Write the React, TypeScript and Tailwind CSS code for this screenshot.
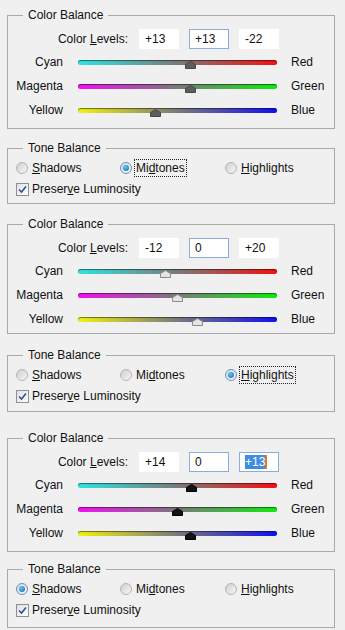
import React from 'react';

type Tone = 'Shadows' | 'Midtones' | 'Highlights';
type ThumbKind = 'dark' | 'light' | 'black';

type Panel = {
  levels: string[];
  focused: boolean[];
  highlightLast: boolean;
  thumb: ThumbKind;
  tone: Tone;
  focusTone: Tone | null;
  cbTop: string;
  cbBottom: string;
  tbTop: string;
  tbBottom: string;
};

const sliders = [
  { left: 'Cyan', right: 'Red', grad: 'bg-[linear-gradient(to_right,#2ee4e4,#7a7a7a_50%,#f51010)]' },
  { left: 'Magenta', right: 'Green', grad: 'bg-[linear-gradient(to_right,#f210f2,#7a7a7a_50%,#10ea10)]' },
  { left: 'Yellow', right: 'Blue', grad: 'bg-[linear-gradient(to_right,#f2f210,#7a7a7a_50%,#1010f2)]' },
];

const panels: Panel[] = [
  {
    levels: ['+13', '+13', '-22'],
    focused: [false, true, false],
    highlightLast: false,
    thumb: 'dark',
    tone: 'Midtones',
    focusTone: 'Midtones',
    cbTop: 'mt-[8px]',
    cbBottom: 'pb-[6px]',
    tbTop: 'mt-[12px]',
    tbBottom: 'pb-[4px]',
  },
  {
    levels: ['-12', '0', '+20'],
    focused: [false, true, false],
    highlightLast: false,
    thumb: 'light',
    tone: 'Highlights',
    focusTone: 'Highlights',
    cbTop: 'mt-[13px]',
    cbBottom: 'pb-[2px]',
    tbTop: 'mt-[14px]',
    tbBottom: 'pb-[5px]',
  },
  {
    levels: ['+14', '0', '+13'],
    focused: [false, true, true],
    highlightLast: true,
    thumb: 'black',
    tone: 'Shadows',
    focusTone: null,
    cbTop: 'mt-[19px]',
    cbBottom: 'pb-[6px]',
    tbTop: 'mt-[10px]',
    tbBottom: 'pb-[7px]',
  },
];

const thumbPaint = {
  dark: { fill: '#5e5e5e', stroke: '#464646' },
  light: { fill: '#e4e4e4', stroke: '#8a8a8a' },
  black: { fill: '#141414', stroke: '#000000' },
};

function Thumb({ value, kind }: { value: number; kind: ThumbKind }) {
  const x = ((value + 100) / 200) * 199;
  const p = thumbPaint[kind];
  return (
    <svg
      width="11"
      height="8"
      viewBox="0 0 11 8"
      className="absolute top-[11px]"
      style={{ left: x - 5.5 }}
    >
      <path d="M5.5 0.5 L10.5 3.5 V7.5 H0.5 V3.5 Z" fill={p.fill} stroke={p.stroke} strokeWidth="1" />
    </svg>
  );
}

function Radio({ on }: { on: boolean }) {
  if (on) {
    return (
      <span className="flex h-[12px] w-[12px] items-center justify-center rounded-full border border-[#6f8fae] bg-[linear-gradient(135deg,#cfdeea,#f2f7fb)]">
        <span className="h-[6px] w-[6px] rounded-full bg-[radial-gradient(circle_at_40%_35%,#6cc8f2,#0d5fa6)]" />
      </span>
    );
  }
  return (
    <span className="h-[12px] w-[12px] rounded-full border border-[#b4b4b4] bg-[linear-gradient(135deg,#cfcfcf,#f7f7f7)]" />
  );
}

function Check() {
  return (
    <span className="flex h-[13px] w-[13px] items-center justify-center border border-[#8e8f8f] bg-[linear-gradient(135deg,#e0e0e0,#ffffff)]">
      <svg width="9" height="9" viewBox="0 0 9 9">
        <path d="M1 4.5 L3.5 7 L8 1.5" fill="none" stroke="#2f4f8f" strokeWidth="1.6" />
      </svg>
    </span>
  );
}

function ColorBalance({ panel }: { panel: Panel }) {
  return (
    <fieldset className={`ml-[7px] w-[328px] border border-[#a9a9a9] ${panel.cbTop} ${panel.cbBottom}`}>
      <legend className="ml-[15px] px-[5px] leading-[14px]">Color Balance</legend>
      <div className="mt-[7px] flex h-[20px] items-center">
        <span className="w-[120px] text-right">
          Color <u>L</u>evels:
        </span>
        <div className="ml-[11px] flex gap-[10px]">
          {panel.levels.map((v, i) => (
            <div
              key={i}
              className={`flex h-[20px] w-[40px] items-center bg-white pl-[5px] border ${
                panel.focused[i] ? 'border-[#8aaedb]' : 'border-white'
              }`}
            >
              {panel.highlightLast && i === 2 ? (
                <>
                  <span className="bg-[#3b8ee0] leading-[14px] text-white">{v}</span>
                  <span className="h-[14px] w-[2px] bg-[#e8761c]" />
                </>
              ) : (
                <span>{v}</span>
              )}
            </div>
          ))}
        </div>
      </div>
      <div className="mt-[1px] flex flex-col">
        {sliders.map((s, i) => (
          <div key={s.left} className="flex h-[24px] items-center">
            <span className="w-[55px] text-right">{s.left}</span>
            <div className="relative ml-[15px] flex h-[24px] w-[199px] items-center">
              <div className={`h-[5px] w-full rounded-full ${s.grad} shadow-[inset_0_1px_1px_rgba(0,0,0,0.5)]`} />
              <Thumb value={parseInt(panel.levels[i], 10)} kind={panel.thumb} />
            </div>
            <span className="ml-[14px]">{s.right}</span>
          </div>
        ))}
      </div>
    </fieldset>
  );
}

function ToneBalance({ panel }: { panel: Panel }) {
  const tones: { name: Tone; label: React.ReactNode; w: string }[] = [
    { name: 'Shadows', label: <><u>S</u>hadows</>, w: 'w-[104px]' },
    { name: 'Midtones', label: <>Mi<u>d</u>tones</>, w: 'w-[105px]' },
    { name: 'Highlights', label: <><u>H</u>ighlights</>, w: 'w-[100px]' },
  ];
  return (
    <fieldset className={`ml-[7px] w-[328px] border border-[#a9a9a9] ${panel.tbTop} ${panel.tbBottom}`}>
      <legend className="ml-[15px] px-[5px] leading-[14px]">Tone Balance</legend>
      <div className="mt-[3px] flex h-[20px] items-center pl-[8px]">
        {tones.map((t) => (
          <div key={t.name} className={`flex items-center gap-[4px] ${t.w}`}>
            <Radio on={panel.tone === t.name} />
            <span
              className={
                panel.focusTone === t.name
                  ? 'leading-[14px] outline-1 outline-dotted outline-[#222] outline-offset-1'
                  : 'leading-[14px]'
              }
            >
              {t.label}
            </span>
          </div>
        ))}
      </div>
      <div className="mt-[1px] flex h-[20px] items-center gap-[3px] pl-[8px]">
        <Check />
        <span>
          Preser<u>v</u>e Luminosity
        </span>
      </div>
    </fieldset>
  );
}

export default function App() {
  return (
    <div className="flex h-[630px] w-[345px] flex-col overflow-hidden bg-[#f0f0f0] font-['Liberation_Sans',Arial,sans-serif] text-[12px] text-[#111]">
      {panels.map((p, i) => (
        <React.Fragment key={i}>
          <ColorBalance panel={p} />
          <ToneBalance panel={p} />
        </React.Fragment>
      ))}
    </div>
  );
}
